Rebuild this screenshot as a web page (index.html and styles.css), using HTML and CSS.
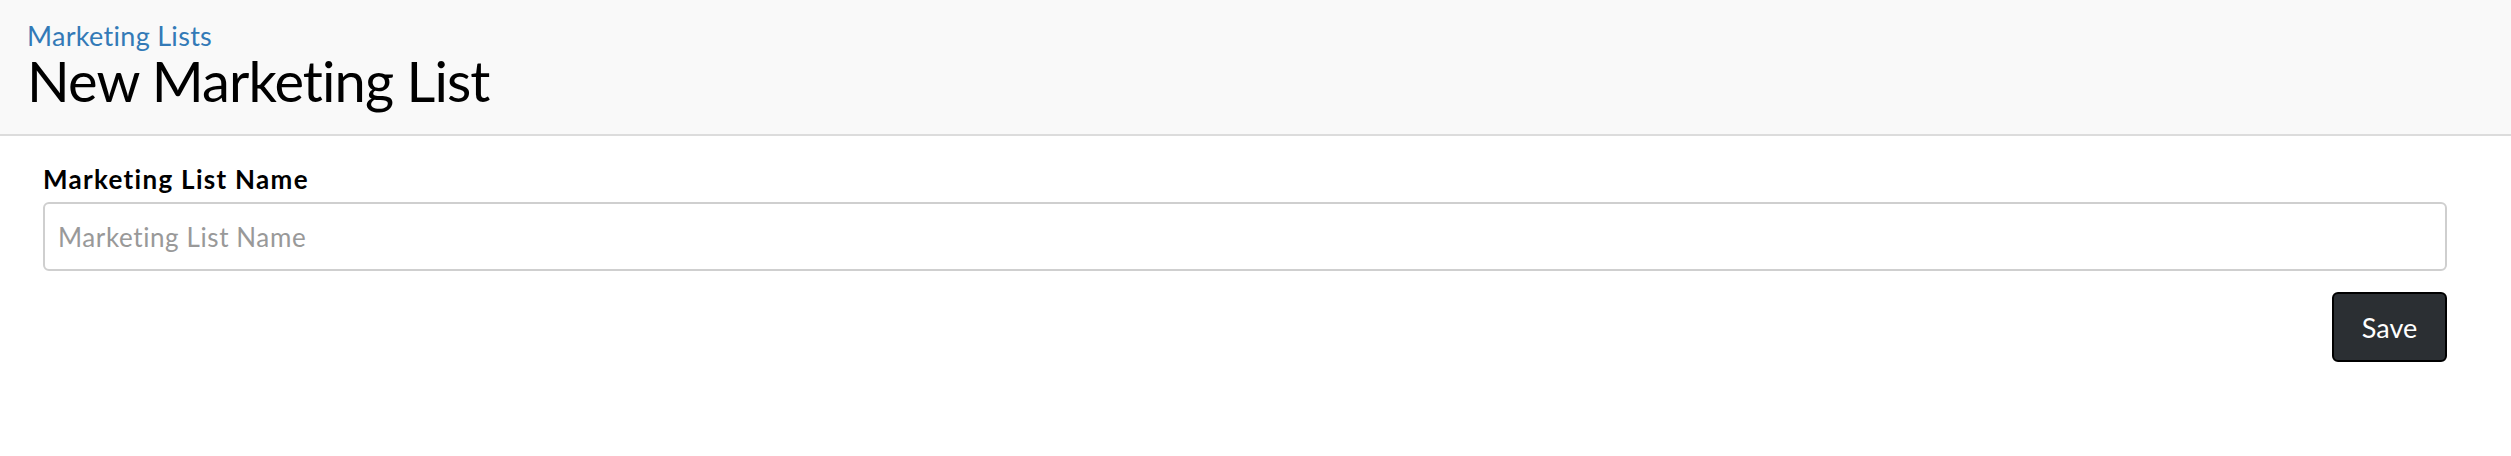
FILE: index.html
```html
<!DOCTYPE html>
<html lang="en">
<head>
<meta charset="utf-8">
<title>New Marketing List</title>
<link rel="stylesheet" href="styles.css">
</head>
<body>
<header class="page-header">
  <a class="breadcrumb" href="#">Marketing Lists</a>
  <h1 class="page-title">New Marketing List</h1>
</header>
<main class="content">
  <form class="list-form">
    <label class="field-label" for="name">Marketing List Name</label>
    <input class="field-input" id="name" type="text" placeholder="Marketing List Name">
    <div class="actions">
      <button class="btn-save" type="button">Save</button>
    </div>
  </form>
</main>
</body>
</html>
```
FILE: styles.css
```css
* { box-sizing: border-box; }
html, body { margin: 0; padding: 0; background: #fff; }
body {
  font-family: Lato, "Noto Sans", sans-serif;
  color: #000;
  font-variant-ligatures: none;
}

.page-header {
  display: flex;
  flex-direction: column;
  align-items: flex-start;
  background: #f9f9f9;
  border-bottom: 2px solid #dcdcdc;
  padding: 20px 27px 25px;
}
.breadcrumb {
  font-size: 27px;
  line-height: 32px;
  letter-spacing: 0.3px;
  color: #337ab7;
  text-decoration: none;
}
.page-title {
  margin: 0;
  font-size: 56px;
  line-height: 57px;
  letter-spacing: -0.9px;
  font-weight: 400;
  color: #000;
}

.content {
  padding: 28px 64px 0 43px;
}
.list-form {
  display: flex;
  flex-direction: column;
}
.field-label {
  font-size: 26px;
  line-height: 30px;
  letter-spacing: 1.3px;
  font-weight: 700;
  margin-bottom: 8px;
}
.field-input {
  height: 69px;
  border: 2px solid #cfcfcf;
  border-radius: 6px;
  padding: 0 13px;
  font-family: inherit;
  font-variant-ligatures: none;
  font-size: 26px;
  letter-spacing: 0.6px;
  color: #333;
  background: #fff;
}
.field-input::placeholder { color: #999; }
.actions {
  display: flex;
  justify-content: flex-end;
  margin-top: 21px;
}
.btn-save {
  width: 115px;
  height: 70px;
  background: #2b2f33;
  color: #fff;
  border: 2px solid #000;
  border-radius: 6px;
  font-family: inherit;
  font-size: 27px;
  padding: 0;
}
```
